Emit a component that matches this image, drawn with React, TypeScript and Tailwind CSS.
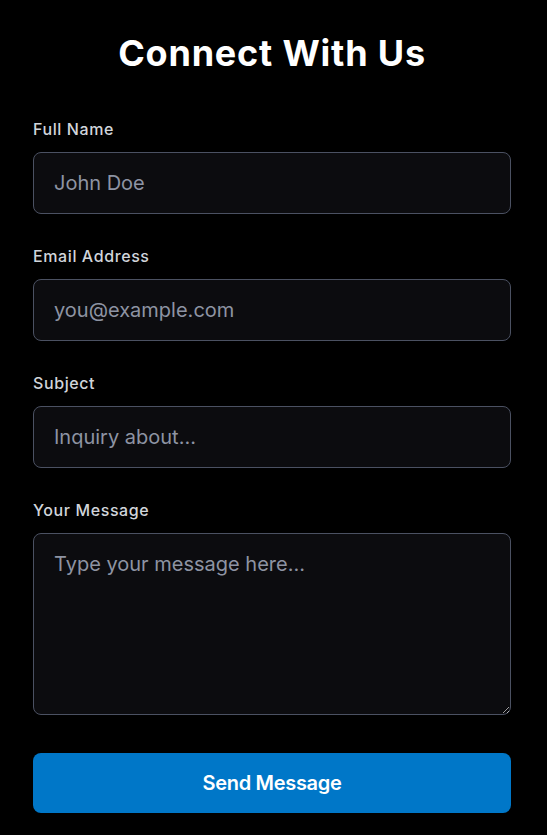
export default function App() {
  const font = { fontFamily: "Inter, 'Noto Sans', sans-serif" };
  const inputCls =
    "block w-full h-[62px] rounded-lg border border-[#4b5162] bg-[#0c0c0f] px-5 text-xl text-gray-200 placeholder:text-[#8e94a3] outline-none";
  const labelCls = "block text-base leading-6 font-medium tracking-[0.6px] text-[#d1d5db] mb-[11px]";
  return (
    <div className="min-h-screen bg-black pl-[33px] pr-[36px] pt-[33px] pb-6" style={font}>
      <h1 className="text-center text-[36px] leading-10 font-bold tracking-[0.8px] text-white mb-[44px]">
        Connect With Us
      </h1>
      <form className="flex flex-col gap-[30px]" onSubmit={(e) => e.preventDefault()}>
        <div>
          <label className={labelCls}>Full Name</label>
          <input className={inputCls} placeholder="John Doe" />
        </div>
        <div>
          <label className={labelCls}>Email Address</label>
          <input className={inputCls} placeholder="you@example.com" />
        </div>
        <div>
          <label className={labelCls}>Subject</label>
          <input className={inputCls} placeholder="Inquiry about..." />
        </div>
        <div>
          <label className={labelCls}>Your Message</label>
          <textarea
            className="block w-full h-[182px] rounded-lg border border-[#4b5162] bg-[#0c0c0f] px-5 py-4 text-xl leading-7 text-gray-200 placeholder:text-[#8e94a3] outline-none"
            placeholder="Type your message here..."
          />
        </div>
        <button
          type="submit"
          className="mt-[8px] h-[60px] w-full rounded-lg bg-[#0077c8] text-xl font-semibold tracking-[-0.3px] text-white"
        >
          Send Message
        </button>
      </form>
    </div>
  );
}
